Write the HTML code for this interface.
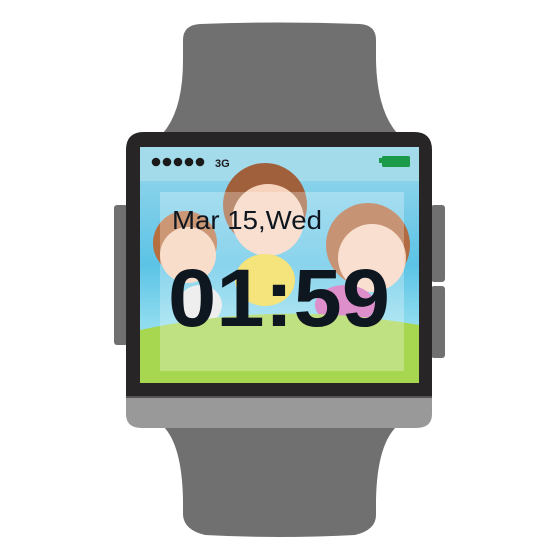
<!DOCTYPE html>
<html><head><style>
html,body{margin:0;padding:0;background:#fff;width:560px;height:560px;overflow:hidden}
.a{position:absolute}
body{position:relative;font-family:"Liberation Sans",sans-serif}
</style></head><body>
<svg class="a" style="left:0;top:0" width="560" height="560">
<path d="M183 40 Q183 25 200 24 Q280 21 360 24 Q376 25 376 40 L376 60 Q377 110 397 133 L163 133 Q183 110 183 60Z" fill="#707070"/>
<path d="M163 426 L397 426 Q377 445 376 500 L376 515 Q376 530 355 535 Q280 539 205 535 Q184 530 183 515 L183 500 Q182 445 163 426Z" fill="#707070"/>
<rect x="114" y="205" width="14" height="140" rx="3" fill="#707070"/>
<rect x="431" y="205" width="14" height="77" rx="3" fill="#707070"/>
<rect x="431" y="286" width="14" height="72" rx="3" fill="#707070"/>
<path d="M126 380 L432 380 L432 414 Q432 428 416 428 L142 428 Q126 428 126 414Z" fill="#999"/>
<path d="M144 132 L414 132 Q432 132 432 150 L432 398 L126 398 L126 150 Q126 132 144 132Z" fill="#272526"/>
<rect x="126" y="396" width="306" height="2" fill="#555"/>
<defs>
<linearGradient id="sky" x1="0" y1="0" x2="0" y2="1">
<stop offset="0" stop-color="#9bd8ec"/><stop offset="0.5" stop-color="#5cc3e6"/><stop offset="0.75" stop-color="#8fdcee"/><stop offset="1" stop-color="#a9e4ef"/>
</linearGradient>
</defs>
<rect x="140" y="147" width="279" height="236" fill="url(#sky)"/>
<rect x="140" y="147" width="279" height="34" fill="#a4dbeb"/>
<circle cx="185" cy="243" r="32" fill="#b86f3f"/>
<circle cx="188" cy="255" r="28" fill="#f5d0b8"/>
<circle cx="265" cy="205" r="42" fill="#a0603c"/>
<circle cx="268" cy="220" r="36" fill="#f7d3bd"/>
<ellipse cx="265" cy="280" rx="30" ry="26" fill="#f2d84a"/>
<circle cx="368" cy="245" r="42" fill="#b26a40"/>
<circle cx="372" cy="258" r="34" fill="#f7d3bd"/>
<ellipse cx="345" cy="305" rx="30" ry="20" fill="#d064b8"/>
<ellipse cx="200" cy="305" rx="22" ry="20" fill="#e8e8e8"/>
<path d="M140 330 Q280 300 419 325 L419 383 L140 383Z" fill="#a7d651"/>
<rect x="160" y="192" width="244" height="179" fill="#fff" fill-opacity="0.28"/>
<g fill="#1a1a1a"><circle cx="156" cy="162" r="4.3"/><circle cx="167" cy="162" r="4.3"/><circle cx="178" cy="162" r="4.3"/><circle cx="189" cy="162" r="4.3"/><circle cx="200" cy="162" r="4.3"/></g>
<text x="215" y="167" font-size="11" font-weight="bold" fill="#1a1a1a" font-family="Liberation Sans">3G</text>
<rect x="379" y="158" width="4" height="5" fill="#1b9a4a"/>
<rect x="382" y="156" width="28" height="11" rx="1.5" fill="#1b9a4a"/>
<text x="172" y="229" font-size="26" fill="#0e1620" font-family="Liberation Sans" textLength="150" lengthAdjust="spacingAndGlyphs">Mar 15,Wed</text>
<text x="168" y="326" font-size="82" font-weight="bold" fill="#0e1620" font-family="Liberation Sans" textLength="222" lengthAdjust="spacingAndGlyphs">01:59</text>
</svg>
</body></html>
